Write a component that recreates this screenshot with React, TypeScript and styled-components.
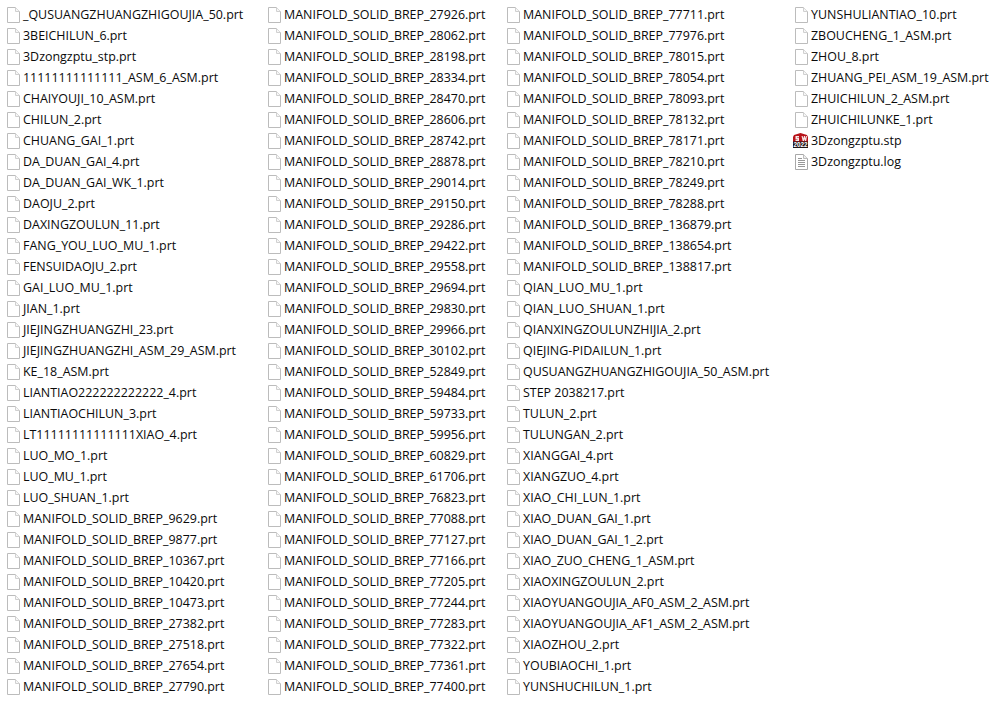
import React from "react";
import styled, { createGlobalStyle } from "styled-components";

const GlobalStyle = createGlobalStyle`
  html, body { margin: 0; padding: 0; background: #fff; }
`;

const columns: { x: number; items: string[] }[] = [
  { x: 7, items: ["_QUSUANGZHUANGZHIGOUJIA_50.prt","3BEICHILUN_6.prt","3Dzongzptu_stp.prt","11111111111111_ASM_6_ASM.prt","CHAIYOUJI_10_ASM.prt","CHILUN_2.prt","CHUANG_GAI_1.prt","DA_DUAN_GAI_4.prt","DA_DUAN_GAI_WK_1.prt","DAOJU_2.prt","DAXINGZOULUN_11.prt","FANG_YOU_LUO_MU_1.prt","FENSUIDAOJU_2.prt","GAI_LUO_MU_1.prt","JIAN_1.prt","JIEJINGZHUANGZHI_23.prt","JIEJINGZHUANGZHI_ASM_29_ASM.prt","KE_18_ASM.prt","LIANTIAO222222222222_4.prt","LIANTIAOCHILUN_3.prt","LT11111111111111XIAO_4.prt","LUO_MO_1.prt","LUO_MU_1.prt","LUO_SHUAN_1.prt","MANIFOLD_SOLID_BREP_9629.prt","MANIFOLD_SOLID_BREP_9877.prt","MANIFOLD_SOLID_BREP_10367.prt","MANIFOLD_SOLID_BREP_10420.prt","MANIFOLD_SOLID_BREP_10473.prt","MANIFOLD_SOLID_BREP_27382.prt","MANIFOLD_SOLID_BREP_27518.prt","MANIFOLD_SOLID_BREP_27654.prt","MANIFOLD_SOLID_BREP_27790.prt"] },
  { x: 268, items: ["27926","28062","28198","28334","28470","28606","28742","28878","29014","29150","29286","29422","29558","29694","29830","29966","30102","52849","59484","59733","59956","60829","61706","76823","77088","77127","77166","77205","77244","77283","77322","77361","77400"].map(n => `MANIFOLD_SOLID_BREP_${n}.prt`) },
  { x: 507, items: ["MANIFOLD_SOLID_BREP_77711.prt","MANIFOLD_SOLID_BREP_77976.prt","MANIFOLD_SOLID_BREP_78015.prt","MANIFOLD_SOLID_BREP_78054.prt","MANIFOLD_SOLID_BREP_78093.prt","MANIFOLD_SOLID_BREP_78132.prt","MANIFOLD_SOLID_BREP_78171.prt","MANIFOLD_SOLID_BREP_78210.prt","MANIFOLD_SOLID_BREP_78249.prt","MANIFOLD_SOLID_BREP_78288.prt","MANIFOLD_SOLID_BREP_136879.prt","MANIFOLD_SOLID_BREP_138654.prt","MANIFOLD_SOLID_BREP_138817.prt","QIAN_LUO_MU_1.prt","QIAN_LUO_SHUAN_1.prt","QIANXINGZOULUNZHIJIA_2.prt","QIEJING-PIDAILUN_1.prt","QUSUANGZHUANGZHIGOUJIA_50_ASM.prt","STEP 2038217.prt","TULUN_2.prt","TULUNGAN_2.prt","XIANGGAI_4.prt","XIANGZUO_4.prt","XIAO_CHI_LUN_1.prt","XIAO_DUAN_GAI_1.prt","XIAO_DUAN_GAI_1_2.prt","XIAO_ZUO_CHENG_1_ASM.prt","XIAOXINGZOULUN_2.prt","XIAOYUANGOUJIA_AF0_ASM_2_ASM.prt","XIAOYUANGOUJIA_AF1_ASM_2_ASM.prt","XIAOZHOU_2.prt","YOUBIAOCHI_1.prt","YUNSHUCHILUN_1.prt"] },
  { x: 795, items: ["YUNSHULIANTIAO_10.prt","ZBOUCHENG_1_ASM.prt","ZHOU_8.prt","ZHUANG_PEI_ASM_19_ASM.prt","ZHUICHILUN_2_ASM.prt","ZHUICHILUNKE_1.prt","3Dzongzptu.stp","3Dzongzptu.log"] },
];

const List = styled.div`
  display: grid;
  grid-template-columns: 261px 239px 288px 1fr;
  padding: 4px 0 0 7px;
  width: 998px;
  height: 701px;
  box-sizing: border-box;
  overflow: hidden;
  font-family: "Open Sans", "Noto Sans", sans-serif;
  font-size: 12.45px;
  color: #0a0a0a;
`;
const Column = styled.div`
  display: flex;
  flex-direction: column;
`;
const Row = styled.div`
  display: flex;
  align-items: center;
  height: 21px;
  gap: 3px;
  white-space: nowrap;
`;
const IconSlot = styled.span`
  width: 13px;
  height: 16px;
  flex: none;
  display: block;
  svg { display: block; overflow: visible; }
`;
const Label = styled.span`
  line-height: 21px;
`;

const BlankIcon = () => (
  <svg width="13" height="16" viewBox="0 0 13 16">
    <path d="M.5.5H8.5L12.5 4.5V15.5H.5Z" fill="#fff" stroke="#bcbcbc" />
    <path d="M8.5.5V4.500H12.500" fill="#f6f6f6" stroke="#d0d0d0" />
  </svg>
);
const LogIcon = () => (
  <svg width="13" height="16" viewBox="0 0 13 16">
    <path d="M.5.5H8.5L12.5 4.5V15.5H.5Z" fill="#fff" stroke="#a8a8a8" />
    <path d="M8.5.5V4.500H12.500" fill="#eee" stroke="#bbb" />
    <path d="M3 4.500H7M3 6.500H10M3 8.500H10M3 10.500H10M3 12.500H10" stroke="#989898" />
  </svg>
);
const StpIcon = () => (
  <svg width="15" height="15" viewBox="0 0 15 15" style={{ marginLeft: -2 }}>
    <path d="M1 2 7.500 0 14 2 15 4V15H0V4Z" fill="#b8141b" />
    <path d="M2.500 3H6V4.500H4V5H6V8H2.500V6.800H4.500V6.200H2.500ZM8.500 3H9.700L10.200 5.500 11 3H12L12.600 5.500 13 3H14L13.200 8H12L11.500 6 11 8H9.700Z" fill="#f6e8e8" />
    <rect x="0" y="8.500" width="15" height="6.500" fill="#1f1517" />
    <text x="7.500" y="14.300" textAnchor="middle" fontFamily="Liberation Sans, sans-serif" fontSize="6.400" fontWeight="700" fill="#fff" textLength="14" lengthAdjust="spacingAndGlyphs">2022</text>
  </svg>
);

const iconFor = (name: string) => {
  if (name.endsWith(".stp")) return <StpIcon />;
  if (name.endsWith(".log")) return <LogIcon />;
  return <BlankIcon />;
};

export default function App() {
  return (
    <>
      <GlobalStyle />
      <List>
        {columns.map(col => (
          <Column key={col.x}>
            {col.items.map(name => (
              <Row key={name}>
                <IconSlot>{iconFor(name)}</IconSlot>
                <Label>{name}</Label>
              </Row>
            ))}
          </Column>
        ))}
      </List>
    </>
  );
}
